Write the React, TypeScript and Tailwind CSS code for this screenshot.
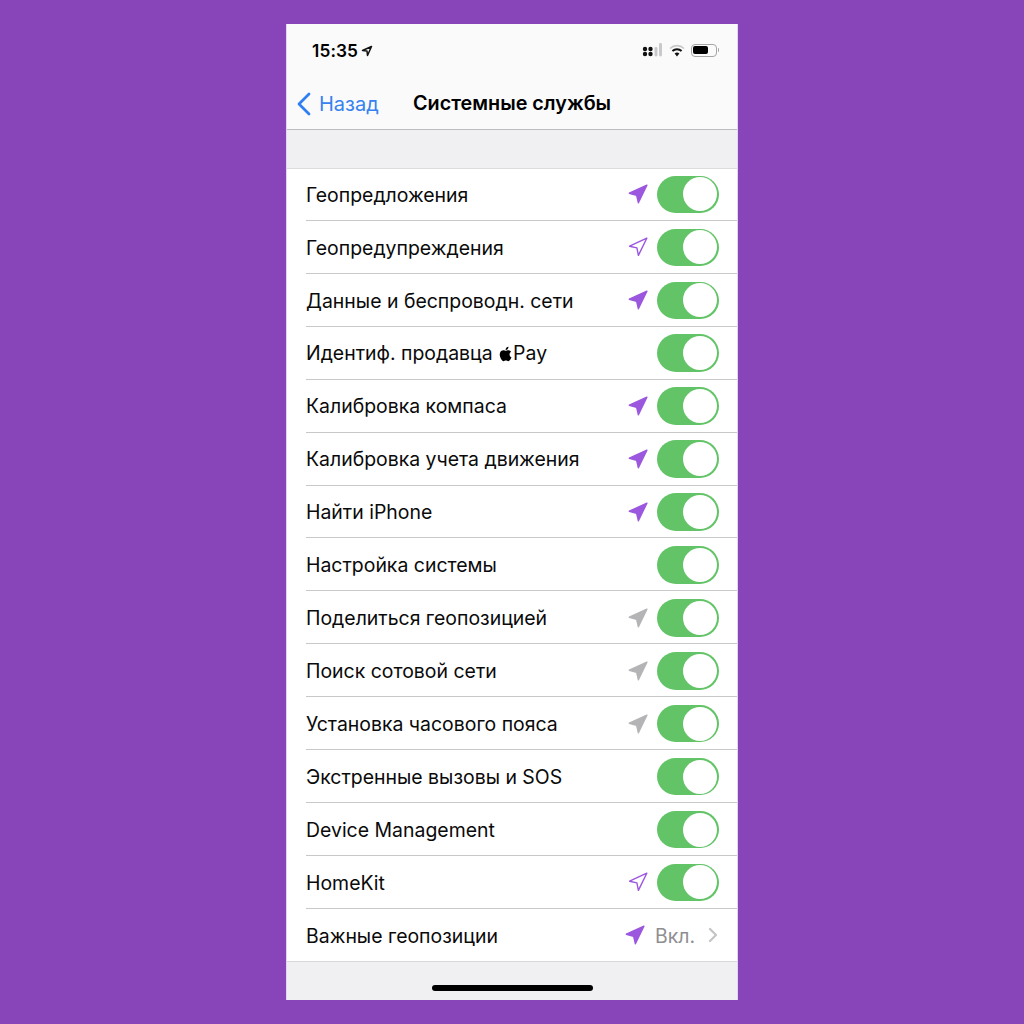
import React from "react";

type Loc = "solid" | "outline" | "gray" | null;

const rows: { t: React.ReactNode; loc: Loc }[] = [
  { t: "Геопредложения", loc: "solid" },
  { t: "Геопредупреждения", loc: "outline" },
  { t: "Данные и беспроводн. сети", loc: "solid" },
  { t: <>Идентиф. продавца <AppleLogo />Pay</>, loc: null },
  { t: "Калибровка компаса", loc: "solid" },
  { t: "Калибровка учета движения", loc: "solid" },
  { t: "Найти iPhone", loc: "solid" },
  { t: "Настройка системы", loc: null },
  { t: "Поделиться геопозицией", loc: "gray" },
  { t: "Поиск сотовой сети", loc: "gray" },
  { t: "Установка часового пояса", loc: "gray" },
  { t: "Экстренные вызовы и SOS", loc: null },
  { t: "Device Management", loc: null },
  { t: "HomeKit", loc: "outline" },
];

function AppleLogo() {
  return (
    <svg viewBox="2 1 20 22" className="inline-block w-[14px] h-[16px] align-[-1.5px] ml-[1px]" fill="#000">
      <path d="M17.05 12.54c-.03-2.6 2.12-3.85 2.22-3.91-1.21-1.77-3.09-2.01-3.76-2.04-1.6-.16-3.12.94-3.93.94-.81 0-2.07-.92-3.4-.89-1.75.03-3.36 1.02-4.26 2.58-1.82 3.15-.46 7.82 1.3 10.38.87 1.25 1.9 2.66 3.25 2.61 1.31-.05 1.8-.84 3.38-.84 1.57 0 2.02.84 3.4.82 1.4-.03 2.29-1.28 3.15-2.54.99-1.45 1.4-2.86 1.43-2.93-.03-.02-2.74-1.05-2.78-4.18zM14.46 4.9c.72-.87 1.2-2.08 1.07-3.29-1.03.04-2.29.69-3.03 1.56-.66.77-1.25 2-1.09 3.18 1.15.09 2.33-.58 3.05-1.45z" />
    </svg>
  );
}

function Arrow({ kind }: { kind: Exclude<Loc, null> }) {
  const color = kind === "gray" ? "#b4b4b6" : "#9b57de";
  return (
    <svg viewBox="0 0 20 20" width={20} height={20} className="shrink-0">
      {kind === "outline" ? (
        <path d="M18.8 1.2 L1.6 9.2 L8.9 10.9 L10.4 18.4 Z" fill="none" stroke={color} strokeWidth="1.4" strokeLinejoin="round" />
      ) : (
        <path d="M18.9 1.1 L1.3 9.2 L8.6 11.2 L10.4 18.8 Z" fill={color} stroke={color} strokeWidth="1.4" strokeLinejoin="round" />
      )}
    </svg>
  );
}

function Toggle() {
  return (
    <div className="ml-[9px] w-[62px] h-[37.5px] rounded-full bg-[#62c466] flex items-center justify-end pr-[2px] shrink-0">
      <div className="w-[34px] h-[34px] rounded-full bg-white" />
    </div>
  );
}

function Row({ children, last }: { children: React.ReactNode; last?: boolean }) {
  return (
    <div className={`pl-[19px] shrink-0 ${last ? "h-[51.93px]" : "h-[52.93px]"}`}>
      <div className={`h-full flex items-center pr-[18px] ${last ? "pt-[1px]" : "pt-[1px] border-b border-[#c8c8cb]"}`}>
        {children}
      </div>
    </div>
  );
}

export default function App() {
  return (
    <div className="w-[1024px] h-[1024px] bg-[#8844b9] flex justify-center pt-[24px] font-['Inter','Liberation_Sans',sans-serif]">
      <div className="w-[452px] h-[976px] bg-[#f0f0f3] border-x border-[#e4d6f1] flex flex-col">
        <div className="h-[106px] bg-[#fafafa] border-b border-[#bcbcbe] flex flex-col shrink-0">
          <div className="h-[53px] flex items-center justify-between pl-[25px] pr-[18px] pt-[1px]">
            <div className="flex items-center gap-[3px] text-[17.3px] font-semibold text-black tracking-[0.1px]">
              15:35
              <svg viewBox="0 0 24 24" width="12" height="12"><path d="M21 3 L3 11 L12 12 L13 21 Z" fill="none" stroke="#111" strokeWidth="3" strokeLinejoin="round" /></svg>
            </div>
            <div className="flex items-center gap-[7px] mt-[-2px]">
              <svg width="20" height="16" viewBox="0 0 20 16">
                <circle cx="3" cy="12" r="2.2" fill="#111" /><circle cx="3" cy="7" r="2.2" fill="#111" />
                <circle cx="8.5" cy="12" r="2.2" fill="#111" /><circle cx="8.5" cy="7" r="2.2" fill="#111" />
                <rect x="12.5" y="5" width="3" height="9.5" rx="1.4" fill="#c9c9cb" />
                <rect x="17" y="1" width="3" height="13.5" rx="1.4" fill="#c9c9cb" />
              </svg>
              <svg width="16" height="13" viewBox="0 0 16 13" fill="none" className="mr-[-1px]">
                <path d="M1 4.5 A10 10 0 0 1 15 4.5" stroke="#c9c9cb" strokeWidth="1.6" />
                <path d="M3.4 7 A6.8 6.8 0 0 1 12.6 7" stroke="#111" strokeWidth="2" />
                <path d="M8 12.5 L5.6 9.6 A3.4 3.4 0 0 1 10.4 9.6 Z" fill="#111" />
              </svg>
              <div className="flex items-center">
                <div className="w-[26px] h-[13px] rounded-[4px] border border-[#a5a5a7] p-[1.5px]">
                  <div className="w-[15px] h-full rounded-[2px] bg-black" />
                </div>
                <div className="w-[1.5px] h-[4px] bg-[#a5a5a7] ml-[1px] rounded-r" />
              </div>
            </div>
          </div>
          <div className="relative flex-1 flex items-center pl-[9px] pt-[1px]">
            <svg width="16" height="24" viewBox="0 0 16 24" fill="none" className="mr-[7px]">
              <path d="M13 2 L3 12 L13 22" stroke="#2f7ff0" strokeWidth="2.8" strokeLinecap="round" strokeLinejoin="round" />
            </svg>
            <span className="text-[20px] text-[#3682f0]">Назад</span>
            <span className="absolute left-[126px] text-[19.8px] font-semibold text-black">Системные службы</span>
          </div>
        </div>
        <div className="h-[38px] shrink-0" />
        <div className="bg-white border-b border-[#d8d8da] shadow-[inset_0_1px_0_#dcdcde] flex flex-col">
          {rows.map((r, i) => (
            <Row key={i}>
              <span className="flex-1 pt-[1.7px] text-[19.45px] text-[#0a0a0a] whitespace-nowrap">{r.t}</span>
              {r.loc && <Arrow kind={r.loc} />}
              <Toggle />
            </Row>
          ))}
          <Row last>
            <span className="flex-1 pt-[1.7px] text-[19.45px] text-[#0a0a0a] whitespace-nowrap">Важные геопозиции</span>
            <Arrow kind="solid" />
            <span className="ml-[10px] pt-[1.7px] text-[19.45px] text-[#8e8e92]">Вкл.</span>
            <svg width="10" height="16" viewBox="0 0 10 16" fill="none" className="ml-[13px] mr-[1px]">
              <path d="M2 2 L8 8 L2 14" stroke="#c4c4c7" strokeWidth="2.2" strokeLinecap="round" strokeLinejoin="round" />
            </svg>
          </Row>
        </div>
        <div className="flex-1 flex justify-center items-end pb-[9px]">
          <div className="w-[161px] h-[6px] rounded-full bg-black" />
        </div>
      </div>
    </div>
  );
}
